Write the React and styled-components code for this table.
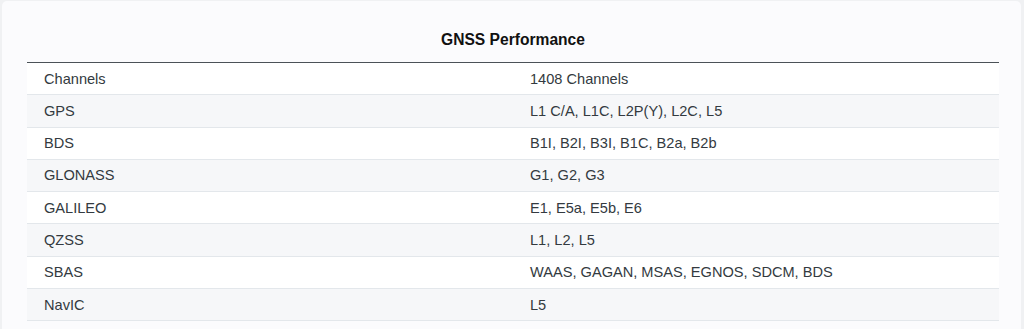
import styled, { createGlobalStyle } from 'styled-components';

const specs = [
  { name: 'Channels', value: '1408 Channels' },
  { name: 'GPS', value: 'L1 C/A, L1C, L2P(Y), L2C, L5' },
  { name: 'BDS', value: 'B1I, B2I, B3I, B1C, B2a, B2b' },
  { name: 'GLONASS', value: 'G1, G2, G3' },
  { name: 'GALILEO', value: 'E1, E5a, E5b, E6' },
  { name: 'QZSS', value: 'L1, L2, L5' },
  { name: 'SBAS', value: 'WAAS, GAGAN, MSAS, EGNOS, SDCM, BDS' },
  { name: 'NavIC', value: 'L5' },
];

export default function App() {
  return (
    <>
      <GlobalStyle />
      <Card>
        <SpecTable>
          <thead>
            <tr>
              <HeadCell colSpan={2}>GNSS Performance</HeadCell>
            </tr>
          </thead>
          <tbody>
            {specs.map((spec, index) => (
              <Row key={spec.name} striped={index % 2 === 1}>
                <Cell>{spec.name}</Cell>
                <Cell>{spec.value}</Cell>
              </Row>
            ))}
          </tbody>
        </SpecTable>
      </Card>
    </>
  );
}

const GlobalStyle = createGlobalStyle`
  body {
    margin: 0;
    background: #f0f1f3;
    font-family: "Liberation Sans", Arial, sans-serif;
    color: #333a40;
  }
`;

const Card = styled.div`
  margin: 1px 3px 0 2px;
  padding: 17px 22px 20px 25px;
  background: #fbfbfd;
  border-radius: 5px;
`;

const SpecTable = styled.table`
  width: 100%;
  border-collapse: collapse;
  table-layout: fixed;
`;

const HeadCell = styled.th`
  padding: 13px 0 14px;
  font-size: 15.6px;
  font-weight: bold;
  line-height: 17px;
  color: #111;
  text-align: center;
  border-bottom: 1px solid #4b5257;
`;

const Row = styled.tr`
  background: ${props => (props.striped ? '#f6f7f9' : '#ffffff')};
  border-bottom: 1px solid #e3e7eb;
`;

const Cell = styled.td`
  padding: 7.6px 17px;
  font-size: 14.6px;
  line-height: 16.1px;
  color: #333a40;
`;
